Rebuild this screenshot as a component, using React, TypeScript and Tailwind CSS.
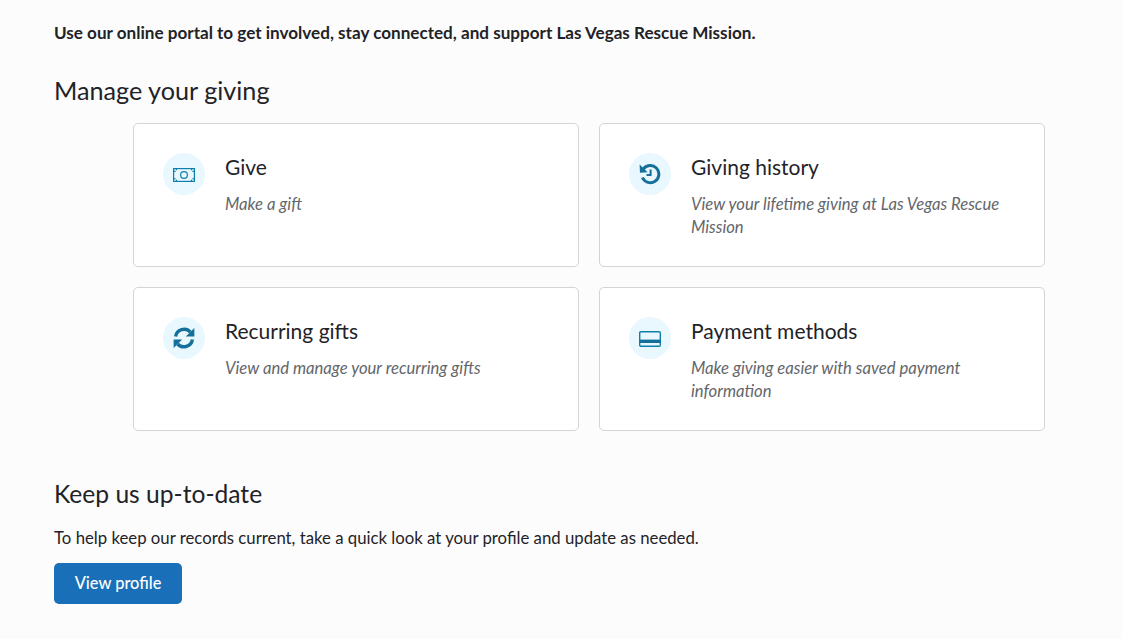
const F = "font-['Lato','Carlito',sans-serif]";

function Money() {
  return (
    <svg className="mt-px" width="22" height="14" viewBox="0 0 22 14" fill="none" stroke="#0e7fa8" strokeWidth="1.2">
      <rect x="0.6" y="0.6" width="20.8" height="12.8" />
      <circle cx="11" cy="7" r="3.4" />
      <path d="M0.6 3.5C2.5 3.5 3.5 2.5 3.5 .6M21.4 3.5C19.5 3.5 18.5 2.5 18.5 .6M0.6 10.5C2.5 10.5 3.5 11.5 3.5 13.4M21.4 10.5C19.5 10.5 18.5 11.5 18.5 13.4" strokeDasharray="2 1" />
    </svg>
  );
}

function History() {
  return (
    <svg width="22" height="22" viewBox="0 0 22 22" fill="none">
      <path d="M4.2 6.2A8.6 8.6 0 1 1 3.4 14.5" stroke="#14709b" strokeWidth="3" />
      <path d="M0.6 1.6L1 9.8L8.6 9.2Z" fill="#14709b" />
      <path d="M11.6 6.5V12H7.5" stroke="#14709b" strokeWidth="2" />
    </svg>
  );
}

function Sync() {
  return (
    <svg width="22" height="22" viewBox="0 0 22 22" fill="none">
      <path d="M2.6 9.6A8.6 8.6 0 0 1 17.4 5" stroke="#14709b" strokeWidth="3.4" />
      <path d="M21.4 1V9.6H12.8Z" fill="#14709b" />
      <path d="M19.4 12.4A8.6 8.6 0 0 1 4.6 17" stroke="#14709b" strokeWidth="3.4" />
      <path d="M0.6 21V12.4H9.2Z" fill="#14709b" />
    </svg>
  );
}

function Card() {
  return (
    <svg className="mt-[2px]" width="22" height="16" viewBox="0 0 22 16" fill="none">
      <rect x="0.7" y="0.7" width="20.6" height="14.6" rx="1.2" stroke="#0e7fa8" strokeWidth="1.4" />
      <rect x="0.6" y="8.6" width="20.8" height="3.4" fill="#14709b" />
    </svg>
  );
}

function Tile({ icon, title, text }: { icon: React.ReactNode; title: string; text: string }) {
  return (
    <div className="h-[144px] rounded-[5px] border border-[#d4d4d4] bg-white pl-[29px] pr-[28px] pt-[29px] flex gap-[20px]">
      <div className="w-[42px] h-[42px] rounded-full bg-[#e8f8fe] flex items-center justify-center shrink-0">{icon}</div>
      <div className="flex-1">
        <div className="text-[21px] leading-[28px] text-[#1f2328]">{title}</div>
        <div className="mt-[12px] text-[16.65px] leading-[23px] italic text-[#63666b]">{text}</div>
      </div>
    </div>
  );
}

export default function App() {
  return (
    <div className={`${F} w-[1122px] h-[639px] overflow-hidden bg-[#fcfcfc] pl-[54px] pt-[21px] text-[#1f2328]`}>
      <p className="text-[17.1px] leading-[23px] font-bold">
        Use our online portal to get involved, stay connected, and support Las Vegas Rescue Mission.
      </p>
      <h2 className="mt-[30px] text-[25.2px] leading-[32px] font-normal">Manage your giving</h2>
      <div className="mt-[17px] ml-[79px] w-[912px] grid grid-cols-2 gap-[20px]">
        <Tile icon={<Money />} title="Give" text="Make a gift" />
        <Tile icon={<History />} title="Giving history" text="View your lifetime giving at Las Vegas Rescue Mission" />
        <Tile icon={<Sync />} title="Recurring gifts" text="View and manage your recurring gifts" />
        <Tile icon={<Card />} title="Payment methods" text="Make giving easier with saved payment information" />
      </div>
      <h2 className="mt-[47px] text-[24.6px] leading-[32px] font-normal">Keep us up-to-date</h2>
      <p className="mt-[16px] text-[16.75px] leading-[23px]">
        To help keep our records current, take a quick look at your profile and update as needed.
      </p>
      <button className="mt-[14px] w-[128px] h-[41px] rounded-[5px] bg-[#1a70b8] text-white text-[16.4px] font-medium">View profile</button>
    </div>
  );
}
